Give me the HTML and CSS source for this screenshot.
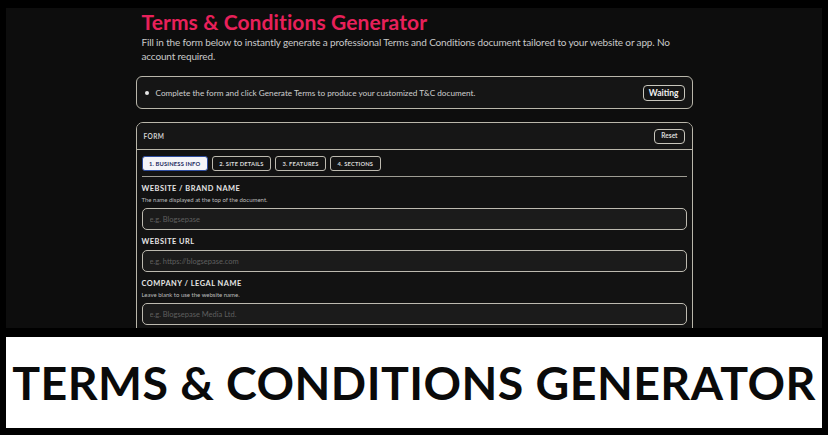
FILE: index.html
```html
<!DOCTYPE html>
<html lang="en">
<head>
<meta charset="utf-8">
<title>Terms &amp; Conditions Generator</title>
<link rel="stylesheet" href="styles.css">
</head>
<body>
<div class="frame">
  <section class="panel">
    <div class="container">
      <header class="intro">
        <h1 class="title">Terms &amp; Conditions Generator</h1>
        <p class="lead">Fill in the form below to instantly generate a professional Terms and Conditions document tailored to your website or app. No account required.</p>
      </header>

      <div class="status">
        <span class="dot"></span>
        <span class="status-text">Complete the form and click Generate Terms to produce your customized T&amp;C document.</span>
        <span class="badge">Waiting</span>
      </div>

      <div class="card">
        <div class="card-head">
          <span class="card-title">FORM</span>
          <button class="reset" type="button">Reset</button>
        </div>
        <div class="card-body">
          <nav class="tabs">
            <button class="tab active" type="button">1. BUSINESS INFO</button>
            <button class="tab" type="button">2. SITE DETAILS</button>
            <button class="tab" type="button">3. FEATURES</button>
            <button class="tab" type="button">4. SECTIONS</button>
          </nav>
          <div class="field">
            <label class="label">WEBSITE / BRAND NAME</label>
            <span class="hint">The name displayed at the top of the document.</span>
            <input class="input" type="text" placeholder="e.g. Blogsepase">
          </div>
          <div class="field">
            <label class="label">WEBSITE URL</label>
            <input class="input" type="text" placeholder="e.g. https://blogsepase.com">
          </div>
          <div class="field">
            <label class="label">COMPANY / LEGAL NAME</label>
            <span class="hint">Leave blank to use the website name.</span>
            <input class="input" type="text" placeholder="e.g. Blogsepase Media Ltd.">
          </div>
        </div>
      </div>
    </div>
  </section>
  <section class="banner">
    <h2 class="banner-text">TERMS &amp; CONDITIONS GENERATOR</h2>
  </section>
</div>
</body>
</html>
```

FILE: styles.css
```css
* { box-sizing: border-box; }
html, body { margin: 0; padding: 0; background: #000; }
body { font-family: "Lato", "Noto Sans", sans-serif; width: 828px; height: 435px; overflow: hidden; }

.frame {
  padding: 8px 6px 0 6px;
  display: flex;
  flex-direction: column;
  gap: 9px;
}

.panel {
  height: 320px;
  background: #0d0d0d;
  overflow: hidden;
  display: flex;
  justify-content: center;
}

.container {
  width: 557px;
  display: flex;
  flex-direction: column;
}

.intro { padding: 1px 6px 0 6px; }

.title {
  margin: 0;
  font-size: 21px;
  font-weight: 700;
  line-height: 25px;
  color: #e8205a;
  letter-spacing: 0.1px;
}

.lead {
  margin: 1px 0 0 0;
  max-width: 535px;
  font-size: 10px;
  letter-spacing: -0.15px;
  line-height: 14px;
  color: #c9c9c9;
}

.status {
  margin-top: 13px;
  height: 33px;
  flex: none;
  border: 1.5px solid #b9b6aa;
  border-radius: 6px;
  background: #151515;
  display: flex;
  align-items: center;
  padding: 0 7px 0 8px;
  gap: 7px;
}

.dot {
  width: 4px;
  height: 4px;
  border-radius: 50%;
  background: #e6e6e6;
  flex: none;
}

.status-text {
  flex: 1;
  font-size: 8.2px;
  color: #cfcfcf;
}

.badge {
  font-size: 8.5px;
  font-weight: 700;
  color: #f2f2f2;
  border: 1.5px solid #c9c7bd;
  border-radius: 4px;
  padding: 2px 5px;
  line-height: 10px;
}

.card {
  margin-top: 13px;
  border: 1.5px solid #b9b6aa;
  border-radius: 7px;
  background: #121212;
  flex: none;
  height: 260px;
}

.card-head {
  height: 27px;
  display: flex;
  align-items: center;
  justify-content: space-between;
  padding: 0 7px 0 7px;
  border-bottom: 1.5px solid #b9b6aa;
  background: #161616;
  border-radius: 6px 6px 0 0;
}

.card-title {
  font-size: 6.5px;
  font-weight: 700;
  letter-spacing: 0.4px;
  color: #cfcfcf;
}

.reset {
  font-family: inherit;
  font-size: 6.5px;
  font-weight: 700;
  color: #dcdcdc;
  background: #171717;
  border: 1.5px solid #c9c7bd;
  border-radius: 4px;
  padding: 0 6px;
  height: 15px;
  line-height: 12px;
}

.card-body {
  padding: 6px 5px 0 5px;
}

.tabs {
  display: flex;
  gap: 4px;
  padding-bottom: 5px;
  border-bottom: 1.5px solid #9e9c93;
}

.tab {
  font-family: inherit;
  font-size: 5.8px;
  font-weight: 700;
  letter-spacing: 0.15px;
  color: #d8d8d8;
  background: #141414;
  border: 1.5px solid #bdbab0;
  border-radius: 3px;
  height: 15px;
  padding: 0 6.5px;
  line-height: 12px;
}

.tab.active {
  background: #f4f4f8;
  color: #1d2a5e;
  border-color: #2f4ea0;
}

.field {
  display: flex;
  flex-direction: column;
  margin-top: 7px;
}

.label {
  font-size: 7.4px;
  font-weight: 700;
  letter-spacing: 0.5px;
  color: #e6e6e6;
  line-height: 9px;
}

.hint {
  font-size: 6px;
  color: #bcbcbc;
  line-height: 8px;
  margin-top: 3px;
}

.input {
  margin-top: 4px;
  height: 22px;
  width: 100%;
  border: 1.5px solid #bdbab0;
  border-radius: 5px;
  background: #1b1b1b;
  padding: 0 7px;
  font-family: inherit;
  font-size: 7.5px;
  color: #ddd;
  outline: none;
}

.input::placeholder { color: #5f5f5f; }

.banner {
  height: 91px;
  background: #fff;
  display: flex;
  align-items: center;
  justify-content: center;
}

.banner-text {
  margin: 0;
  font-size: 46.5px;
  font-weight: 700;
  color: #0a0a0a;
  letter-spacing: 0.45px;
  line-height: 1;
  white-space: nowrap;
}
```
